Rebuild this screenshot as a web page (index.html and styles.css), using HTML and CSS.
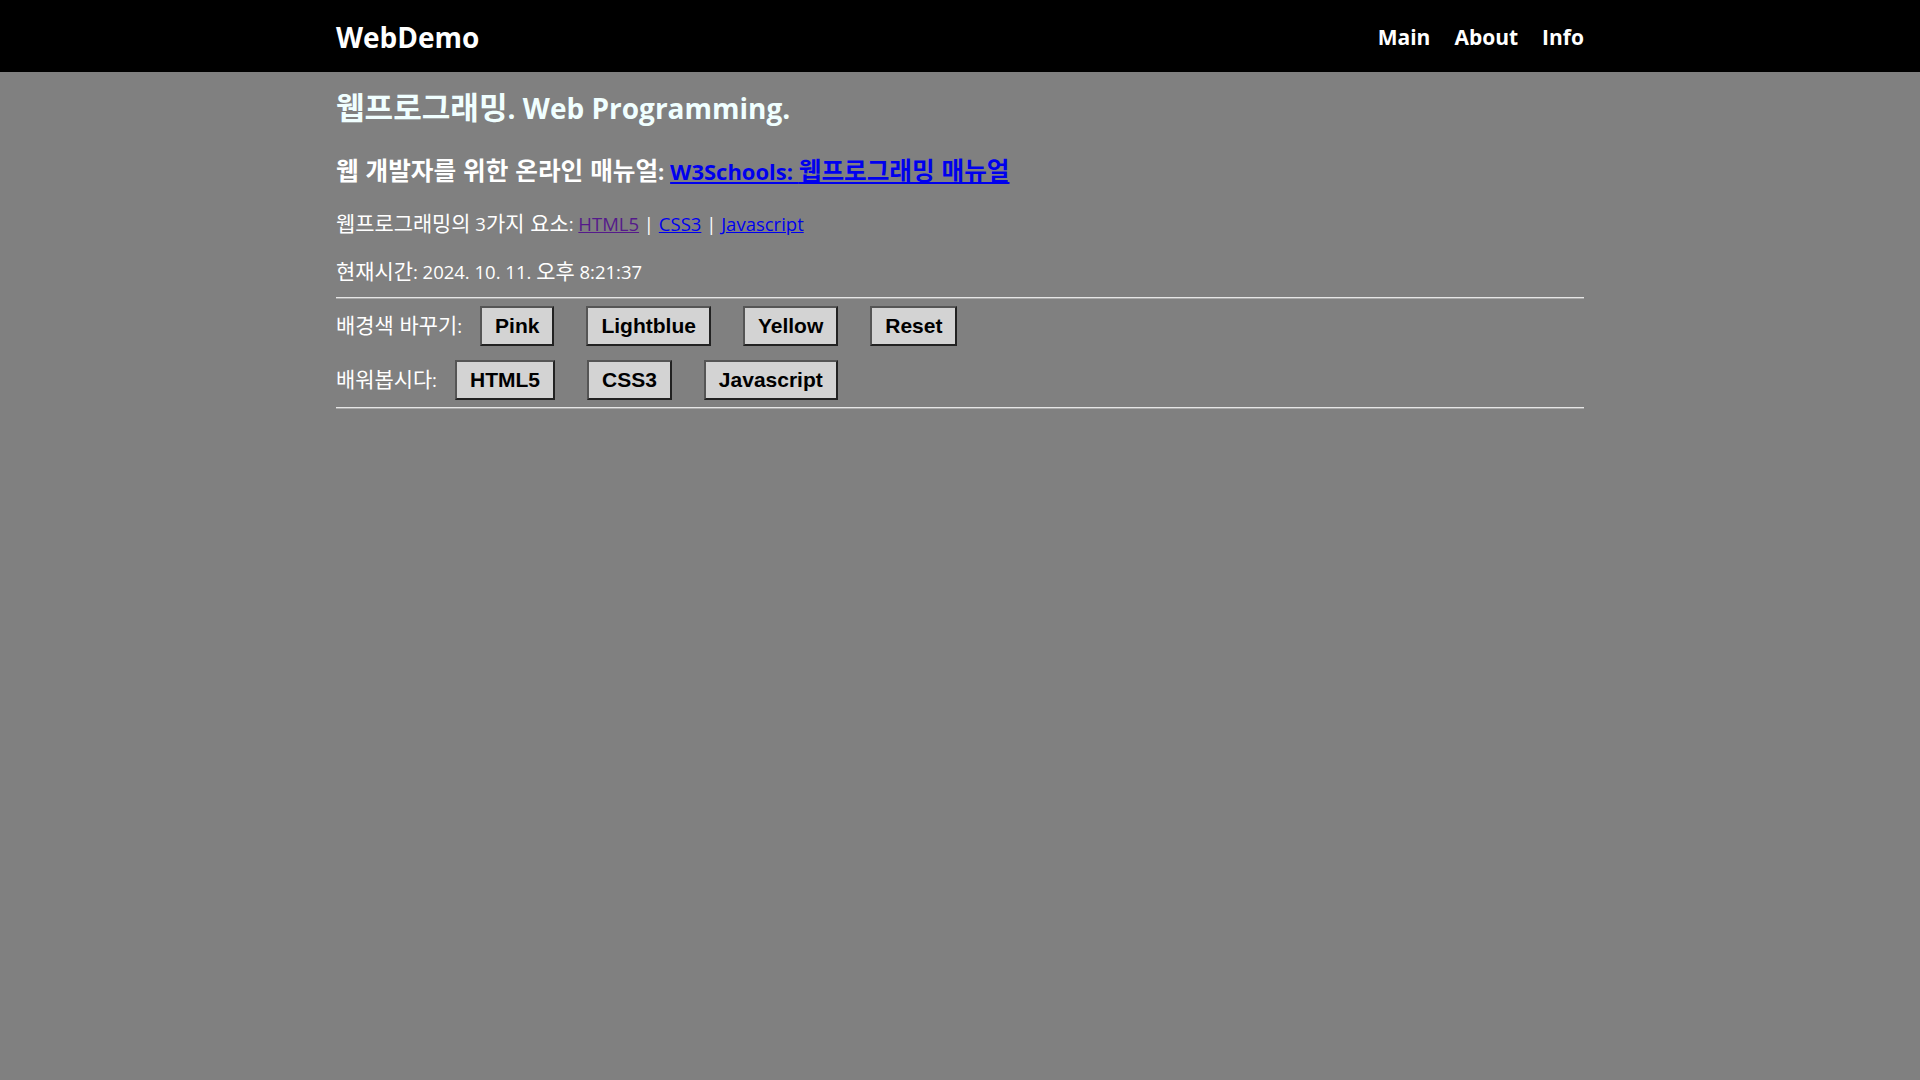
FILE: index.html
```html
<!DOCTYPE html>
<html lang="ko">
<head>
<meta charset="utf-8">
<title>WebDemo</title>
<link rel="stylesheet" href="styles.css">
</head>
<body>
<header class="topbar">
  <div class="wrap topbar-inner">
    <div class="brand">WebDemo</div>
    <nav class="nav">
      <a href="#" class="nav-link">Main</a>
      <a href="#" class="nav-link">About</a>
      <a href="#" class="nav-link">Info</a>
    </nav>
  </div>
</header>
<main class="wrap content">
  <h1 class="title"><span class="ko">웹프로그래밍</span>. Web Programming.</h1>
  <p class="manual"><span class="ko">웹 개발자를 위한 온라인 매뉴얼</span>: <a href="#" class="link">W3Schools: <span class="ko">웹프로그래밍 매뉴얼</span></a></p>
  <p class="line"><span class="ko">웹프로그래밍의</span> 3<span class="ko">가지 요소</span>: <a href="#" class="link visited">HTML5</a> | <a href="#" class="link">CSS3</a> | <a href="#" class="link">Javascript</a></p>
  <p class="line time"><span class="ko">현재시간</span>: 2024. 10. 11. <span class="ko">오후</span> 8:21:37</p>
  <hr class="rule">
  <div class="btn-row">
    <span class="row-label"><span class="ko">배경색 바꾸기</span>:</span>
    <div class="btns">
      <button class="btn">Pink</button>
      <button class="btn">Lightblue</button>
      <button class="btn">Yellow</button>
      <button class="btn">Reset</button>
    </div>
  </div>
  <div class="btn-row second">
    <span class="row-label"><span class="ko">배워봅시다</span>:</span>
    <div class="btns">
      <button class="btn">HTML5</button>
      <button class="btn">CSS3</button>
      <button class="btn">Javascript</button>
    </div>
  </div>
  <hr class="rule">
</main>
</body>
</html>
```
FILE: styles.css
```css
html, body {
  margin: 0;
  padding: 0;
}
body {
  background: #808080;
  color: #ffffff;
  font-family: "Open Sans", "Noto Sans CJK KR", sans-serif;
  font-size: 18.5px;
  min-height: 1080px;
}
.ko {
  font-family: "Noto Sans CJK KR", "Open Sans", sans-serif;
  font-size: 1.13em;
  line-height: 1;
}
.wrap {
  width: 65%;
  margin: 0 auto;
}
.topbar {
  background: #000000;
  height: 72px;
}
.topbar-inner {
  height: 72px;
  display: flex;
  align-items: center;
  justify-content: space-between;
}
.brand {
  font-size: 28px;
  font-weight: 700;
  color: #ffffff;
  line-height: 36px;
  padding-top: 2px;
}
.nav {
  display: flex;
  gap: 24px;
  padding-top: 2px;
}
.nav-link {
  color: #ffffff;
  text-decoration: none;
  font-weight: 700;
  font-size: 21px;
}
.content {
  padding-top: 16px;
}
.title {
  margin: 0;
  font-size: 28px;
  line-height: 40px;
  font-weight: 700;
  color: #f0ffff;
}
.title .ko {
  font-size: 1.11em;
}
.manual {
  margin: 28px 0 0;
  font-size: 22px;
  line-height: 30px;
  font-weight: 700;
}
.manual .ko {
  font-size: 1.12em;
}
.line {
  margin: 26px 0 0;
  line-height: 24px;
}
.time {
  margin-top: 24px;
}
.link {
  color: #0000ee;
}
.link.visited {
  color: #551a8b;
}
.rule {
  margin: 13px 0 0;
  border: 0;
  border-top: 1px solid #e6e6e6;
  border-bottom: 1px solid #a8a8a8;
  height: 0;
}
.btn-row {
  display: flex;
  align-items: center;
  gap: 18px;
  margin-top: 7px;
}
.btn-row.second {
  margin-top: 14px;
}
.row-label {
  line-height: 24px;
}
.btns {
  display: flex;
  gap: 32px;
}
.btn {
  font-family: "Liberation Sans", Arial, sans-serif;
  font-weight: 700;
  font-size: 21px;
  line-height: 24px;
  padding: 6px 13px;
  background: #d3d3d3;
  color: #000000;
  border: 2px solid #333333;
  border-color: #555555 #222222 #222222 #555555;
  border-radius: 0;
  height: 40px;
  box-sizing: border-box;
}
.btn-row + .rule {
  margin-top: 7px;
}
```
